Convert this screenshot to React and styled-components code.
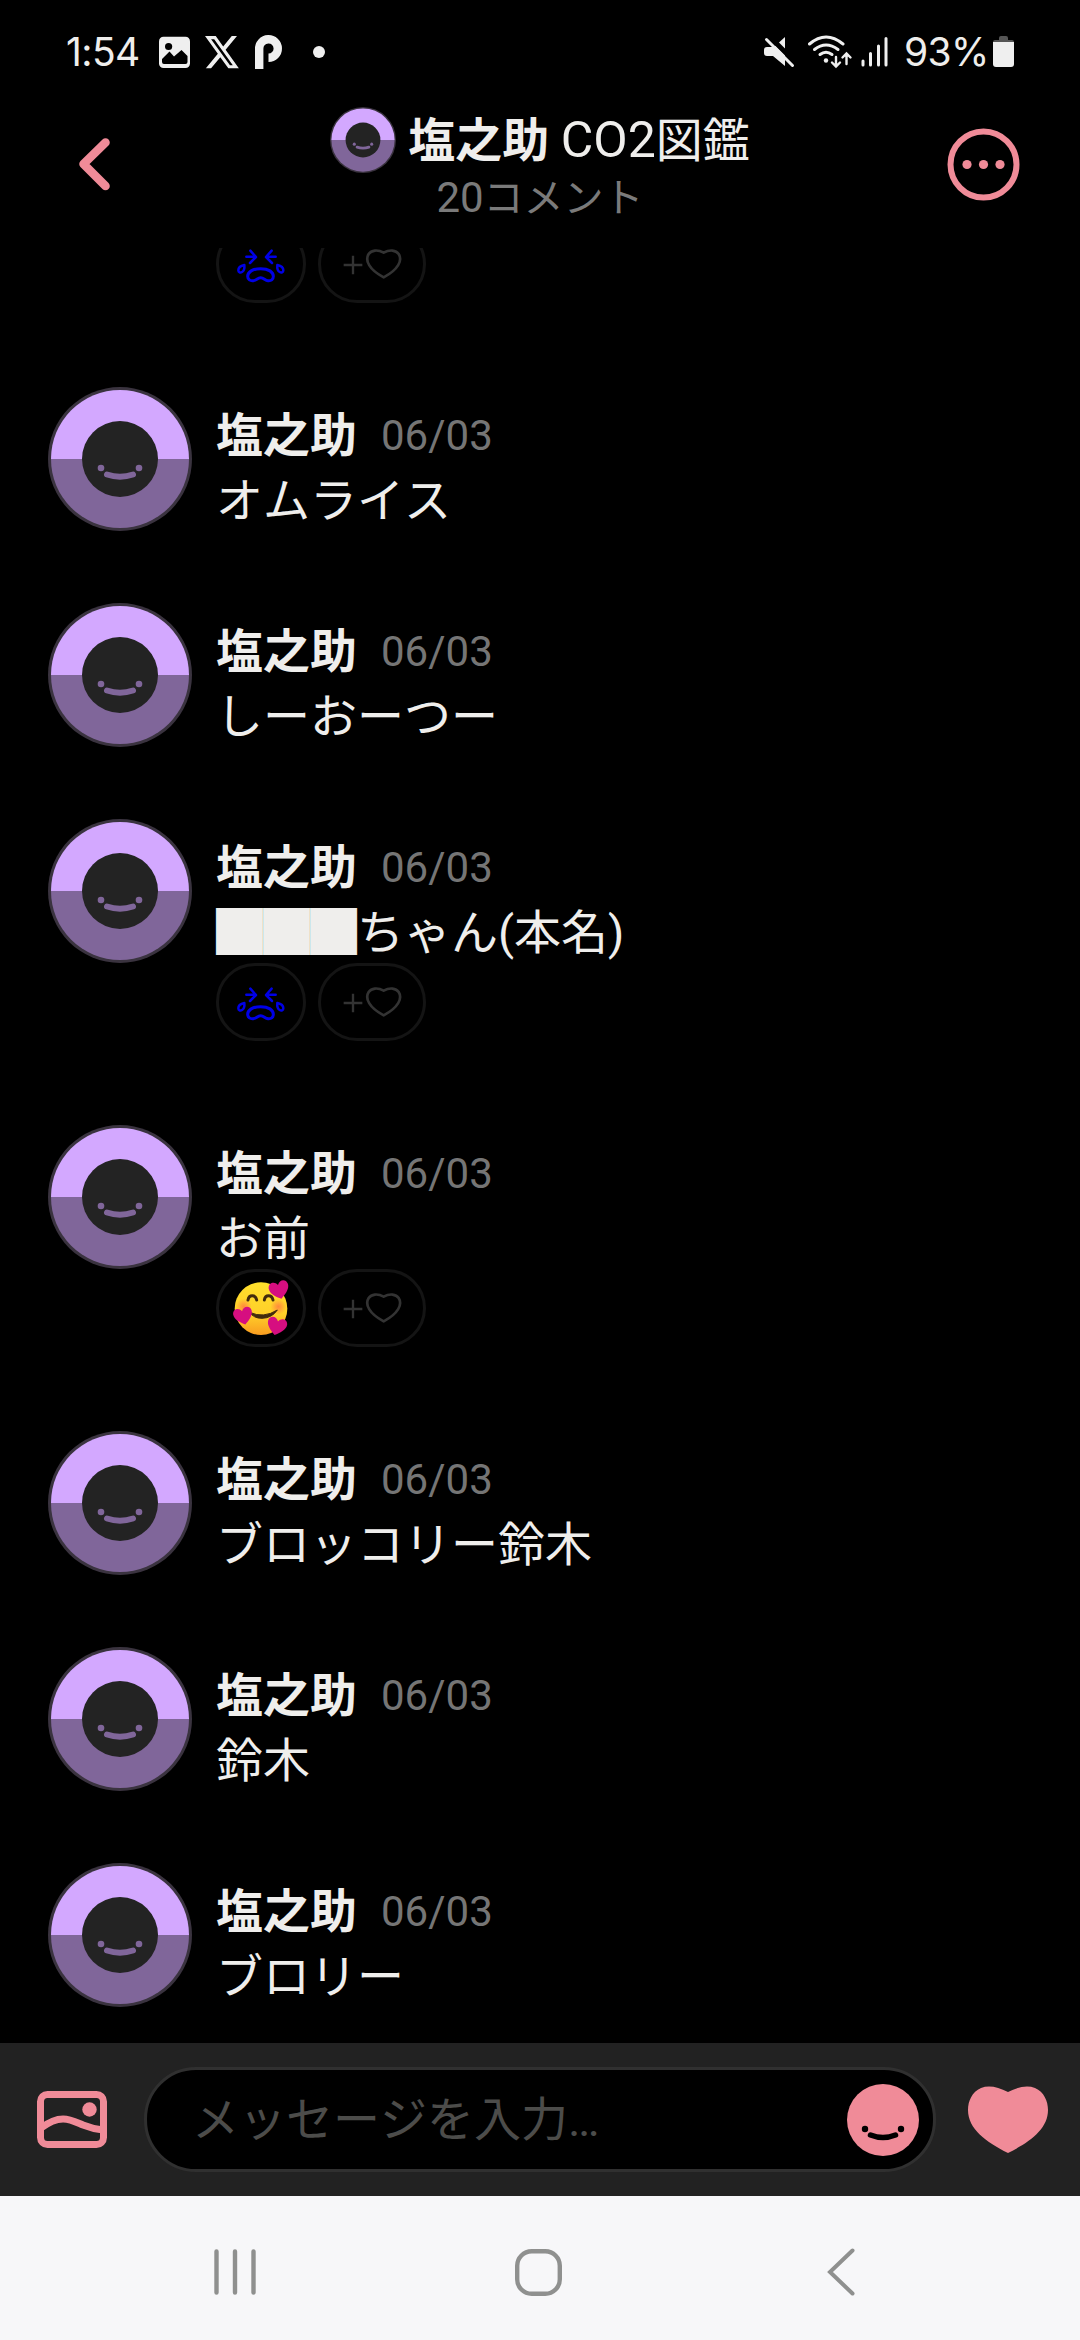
import styled, { createGlobalStyle } from "styled-components";

const GlobalStyle = createGlobalStyle`
  * {
    box-sizing: border-box;
  }

  body {
    margin: 0;
    background-color: black;
  }
`;

const Screen = styled.div`
  display: flex;
  flex-direction: column;
  width: 1080px;
  height: 2340px;
  overflow: hidden;
  background-color: black;
  color: #efeeec;
  font-family: Roboto, "Noto Sans CJK JP", sans-serif;
  font-size: 47px;
  font-kerning: none;

  svg {
    display: block;
    flex-shrink: 0;
  }
`;

const StatusBar = styled.div`
  display: flex;
  align-items: center;
  height: 104px;
  padding: 0 66px 0 66px;
  font-family: Inter, sans-serif;
  font-size: 39px;
  line-height: 52px;
`;

const Clock = styled.span`
  width: 93px;
  letter-spacing: -0.6px;
`;

const StatusIcons = styled.div`
  display: flex;
  align-items: center;
  flex: 1;
`;

const StatusRight = styled.div`
  display: flex;
  align-items: center;
`;

const Battery = styled.span`
  width: 89px;
  letter-spacing: -0.6px;
`;

const Header = styled.header`
  display: flex;
  align-items: flex-start;
  justify-content: space-between;
  height: 144px;
  padding: 0 60px;
`;

const IconButton = styled.button`
  display: flex;
  align-items: center;
  width: 73px;
  height: 120px;
  padding: 0 0 0 ${(props) => (props.$back ? "19px" : "0")};
  border: none;
  background: none;
`;

const TitleBlock = styled.div`
  display: flex;
  flex-direction: column;
  align-items: center;
  padding-top: 3px;
`;

const Title = styled.h1`
  display: flex;
  align-items: center;
  gap: 12px;
  height: 66px;
  margin: 0;
  font-size: 47px;
  font-weight: 400;
  line-height: 68px;
  white-space: pre;
`;

const Latin = styled.span`
  font-size: 50px;
`;

const CommentCount = styled.p`
  height: 48px;
  margin: 0;
  color: #7a7a7a;
  font-size: 40px;
  line-height: 50px;

  span {
    font-size: 42px;
  }
`;

const CommentList = styled.main`
  display: flex;
  flex-direction: column;
  justify-content: flex-end;
  gap: 72px;
  height: 1795px;
  padding: 0 48px 36px;
  overflow: hidden;
`;

const CommentRow = styled.article`
  display: flex;
  gap: 24px;
  padding-left: ${(props) => (props.$cut ? "168px" : "0")};
`;

const CommentHead = styled.div`
  display: flex;
  align-items: center;
  gap: 24px;
  height: 62px;
  margin-top: 18px;
`;

const Name = styled.strong`
  font-weight: 700;
  line-height: 64px;
`;

const CommentDate = styled.time`
  color: #757575;
  font-size: 42px;
  line-height: 62px;
`;

const CommentText = styled.p`
  height: 64px;
  margin: 0;
  line-height: 67px;
`;

const Reactions = styled.div`
  display: flex;
  gap: 12px;
  height: 90px;
`;

const Reaction = styled.div`
  display: flex;
  align-items: center;
  justify-content: center;
  width: ${(props) => (props.$wide ? "108px" : "90px")};
  height: 78px;
  border: 3px solid #141414;
  border-radius: 39px;
`;

const Composer = styled.footer`
  display: flex;
  align-items: center;
  height: 153px;
  padding: 0 31px 0 37px;
  background-color: #222222;
`;

const Field = styled.div`
  display: flex;
  align-items: center;
  width: 792px;
  height: 105px;
  margin: 0 32px 0 37px;
  padding: 0 14px 0 45px;
  border: 3px solid #303030;
  border-radius: 52px;
  background-color: black;
`;

const Placeholder = styled.span`
  flex: 1;
  color: #4c4c4a;
  line-height: 72px;
`;

const NavBar = styled.nav`
  display: flex;
  height: 144px;
  padding: 8px 88px 0 84px;
  background-color: #f7f7f9;
`;

const NavItem = styled.div`
  display: flex;
  align-items: center;
  justify-content: center;
  flex: 1;
`;

function Avatar({ size }) {
  return (
    <svg width={size} height={size} viewBox="0 0 144 144">
      <circle cx="72" cy="72" r="72" fill="#3a333f" />
      <path d="M3 72a69 69 0 0 1 138 0z" fill="#d3a8ff" />
      <path d="M3 72a69 69 0 0 0 138 0z" fill="#80669a" />
      <circle cx="72" cy="72" r="38" fill="#232323" />
      <g fill="#80669a">
        <circle cx="53" cy="81" r="3.3" />
        <circle cx="91" cy="81" r="3.3" />
      </g>
      <path
        d="M59 87.5q13 4.5 26 0"
        fill="none"
        stroke="#80669a"
        strokeWidth="6"
        strokeLinecap="round"
      />
    </svg>
  );
}

function CryFace() {
  return (
    <svg width="52" height="37" viewBox="106 461 156 111">
      <g
        fill="none"
        stroke="#0000e6"
        strokeWidth="7.5"
        strokeLinecap="round"
        strokeLinejoin="round"
      >
        <path d="M152 475l17 19l-18 18M140 493h26" />
        <path d="M216 475l-17 19l18 18M228 493h-26" />
        <path d="M134 518c-10 2 -18 8 -18 16c0 6 6 8 11 5c7 -4 8 -12 7 -21z" />
        <path d="M233 518c10 2 18 8 18 16c0 6 -6 8 -11 5c-7 -4 -8 -12 -7 -21z" />
        <path
          d="M183 529c-24 0 -39 10 -39 23c0 10 8 14 17 13c9 -1 13 -9 22 -9s13 8 22 9c9 1 16 -3 16 -13c0 -13 -14 -23 -38 -23z"
          strokeWidth="9"
        />
      </g>
    </svg>
  );
}

function LoveFace() {
  const heart = "M0 24C-13 15 -28 3 -27 -12C-25 -27 -7 -29 0 -15C7 -29 25 -27 27 -12C28 3 13 15 0 24z";
  return (
    <svg width="56" height="56" viewBox="100 450 168 168">
      <defs>
        <linearGradient id="face" x1="0" y1="0" x2="0" y2="1">
          <stop offset="0" stopColor="#ffe02c" />
          <stop offset="0.6" stopColor="#ffd029" />
          <stop offset="1" stopColor="#f99c20" />
        </linearGradient>
        <radialGradient id="blush">
          <stop offset="0" stopColor="#ff7043" stopOpacity="0.75" />
          <stop offset="1" stopColor="#ff7043" stopOpacity="0" />
        </radialGradient>
      </defs>
      <circle cx="184" cy="536" r="79" fill="url(#face)" />
      <circle cx="132" cy="530" r="24" fill="url(#blush)" />
      <circle cx="236" cy="530" r="24" fill="url(#blush)" />
      <g fill="none" stroke="#422b0d" strokeWidth="9" strokeLinecap="round">
        <path d="M145 510c3 -17 22 -17 26 0" />
        <path d="M194 510c3 -17 22 -17 26 0" />
      </g>
      <path
        d="M150 547q42 19 83 -7q-16 24 -46 25q-25 0 -37 -18z"
        fill="#422b0d"
        stroke="#422b0d"
        strokeWidth="3"
        strokeLinejoin="round"
      />
      <g fill="#d60e80">
        <path d={heart} transform="translate(239 481) rotate(-14) scale(1.1)" />
        <path d={heart} transform="translate(131 559) rotate(-14) scale(1.05)" />
        <path d={heart} transform="translate(231 590) rotate(14) scale(1.08)" />
      </g>
    </svg>
  );
}

function AddReaction() {
  return (
    <svg width="60" height="30" viewBox="427 469 180 90">
      <path d="M460 489v56M432 517h56" stroke="#333333" strokeWidth="7" />
      <path
        d="M552 480C534 470 515 472 507 484C495 503 508 531 552 554C596 531 609 503 597 484C589 472 570 470 552 480z"
        fill="none"
        stroke="#333333"
        strokeWidth="8"
        strokeLinejoin="round"
      />
    </svg>
  );
}

function ReactionRow({ kind }) {
  return (
    <Reactions>
      <Reaction>{kind === "cry" ? <CryFace /> : <LoveFace />}</Reaction>
      <Reaction $wide>
        <AddReaction />
      </Reaction>
    </Reactions>
  );
}

const comments = [
  { id: 1, text: "オムライス" },
  { id: 2, text: "しーおーつー" },
  { id: 3, text: "███ちゃん(本名)", reaction: "cry" },
  { id: 4, text: "お前", reaction: "love" },
  { id: 5, text: "ブロッコリー鈴木" },
  { id: 6, text: "鈴木" },
  { id: 7, text: "ブロリー" },
];

function App() {
  return (
    <>
      <GlobalStyle />
      <Screen>
        <StatusBar>
          <Clock>1:54</Clock>
          <StatusIcons>
            <svg width="166" height="36" viewBox="159 34 166 36">
              <rect x="159" y="36.7" width="31" height="31.3" rx="4.5" fill="#efefef" />
              <circle cx="168.6" cy="46.5" r="3.6" fill="black" />
              <path
                d="M162 62v-3l7.5 -7.5l4.5 5l7.5 -6.5l6 6v6q0 2 -2 2h-21.5q-2 0 -2 -2z"
                fill="black"
              />
              <svg
                x="205"
                y="36"
                width="34"
                height="32.5"
                viewBox="0 1.15 24 21.7"
                preserveAspectRatio="none"
              >
                <path
                  d="M18.901 1.153h3.68l-8.04 9.19L24 22.846h-7.406l-5.8-7.584-6.638 7.584H.474l8.6-9.83L0 1.154h7.594l5.243 6.932ZM17.61 20.644h2.039L6.486 3.24H4.298Z"
                  fill="#efefef"
                />
              </svg>
              <path
                d="M259.2 69v-20a9.3 9.3 0 1 1 9.3 8.8"
                fill="none"
                stroke="#efefef"
                strokeWidth="8.4"
              />
              <circle cx="319" cy="52" r="6" fill="#efefef" />
            </svg>
          </StatusIcons>
          <StatusRight>
            <svg width="140" height="36" viewBox="764 34 140 36">
              <g fill="#efefef">
                <path d="M764 50q0 -3 3 -3h7l11 -10v29l-12 -10h-6q-3 0 -3 -3z" />
                <path d="M770.5 37.5l26 26" stroke="black" strokeWidth="5" />
                <path
                  d="M766.5 39.5l26 26"
                  stroke="#efefef"
                  strokeWidth="3"
                  strokeLinecap="round"
                />
                <circle cx="826" cy="60.5" r="2.2" />
              </g>
              <g fill="none" stroke="#efefef" strokeWidth="3" strokeLinecap="round">
                <path d="M809.5 44q16.5 -14 33.5 0" />
                <path d="M814.5 49.5q11.5 -9 23.5 0" />
                <path d="M820 54.5q6 -4.5 12 0" />
                <path
                  d="M836 57v9M832 62.5l4 4l4 -4M846.5 64v-10M842.5 57.5l4 -4l4 4"
                  strokeWidth="2.4"
                />
                <path d="M863 61v4M870.5 53.5v11.5M878.5 46v19M886 38.5v26.5" />
              </g>
            </svg>
            <Battery>93%</Battery>
            <svg width="21" height="32" viewBox="0 0 21 32">
              <path d="M6 4V2q0 -2 2 -2h5q2 0 2 2v2h4q2 0 2 2H0q0 -2 2 -2z" fill="#555555" />
              <path d="M0 6h21v22q0 3 -3 3H3q-3 0 -3 -3z" fill="#efefef" />
            </svg>
          </StatusRight>
        </StatusBar>

        <Header>
          <IconButton $back>
            <svg width="31" height="54" viewBox="0 0 31 54">
              <path
                d="M26.5 5.5L4.5 27L26.5 49"
                fill="none"
                stroke="#f08b98"
                strokeWidth="8.6"
                strokeLinecap="round"
                strokeLinejoin="round"
              />
            </svg>
          </IconButton>
          <TitleBlock>
            <Title>
              <Avatar size={66} />
              <span>
                <Name>塩之助</Name> <Latin>CO2</Latin>図鑑
              </span>
            </Title>
            <CommentCount>
              <span>20</span>コメント
            </CommentCount>
          </TitleBlock>
          <IconButton>
            <svg width="73" height="73" viewBox="0 0 73 73">
              <circle cx="36.5" cy="36.5" r="33" fill="none" stroke="#f08b98" strokeWidth="6" />
              <g fill="#f08b98">
                <circle cx="20" cy="36.5" r="4.6" />
                <circle cx="36.5" cy="36.5" r="4.6" />
                <circle cx="53" cy="36.5" r="4.6" />
              </g>
            </svg>
          </IconButton>
        </Header>

        <CommentList>
          <CommentRow $cut>
            <ReactionRow kind="cry" />
          </CommentRow>
          {comments.map((comment) => (
            <CommentRow key={comment.id}>
              <Avatar size={144} />
              <div>
                <CommentHead>
                  <Name>塩之助</Name>
                  <CommentDate>06/03</CommentDate>
                </CommentHead>
                <CommentText>{comment.text}</CommentText>
                {comment.reaction && <ReactionRow kind={comment.reaction} />}
              </div>
            </CommentRow>
          ))}
        </CommentList>

        <Composer>
          <svg width="70" height="57" viewBox="0 0 70 57">
            <g fill="none" stroke="#f08b98" strokeWidth="7">
              <rect x="3.5" y="3.5" width="63" height="50" rx="7" />
              <path d="M4 37C24 22 34 29 46 34Q56 38 66 39" />
            </g>
            <circle cx="52.5" cy="18.5" r="7.2" fill="#f08b98" />
          </svg>
          <Field>
            <Placeholder>メッセージを入力…</Placeholder>
            <svg width="72" height="72" viewBox="0 0 72 72">
              <circle cx="36" cy="36" r="36" fill="#f08b98" />
              <circle cx="18" cy="45" r="3.2" />
              <circle cx="54" cy="45" r="3.2" />
              <path
                d="M23.5 51q12.5 5 25 0"
                fill="none"
                stroke="black"
                strokeWidth="5.5"
                strokeLinecap="round"
              />
            </svg>
          </Field>
          <svg width="80" height="67" viewBox="0 0 80 67">
            <path
              d="M40 6C50 1 59 -1 67 2C76 6 80 15 80 24C80 43 62 56 40 67C18 56 0 43 0 24C0 15 4 6 13 2C21 -1 30 1 40 6z"
              fill="#f08b98"
            />
          </svg>
        </Composer>

        <NavBar>
          <NavItem>
            <svg width="44" height="46" viewBox="0 0 44 46">
              <path
                d="M3.5 2.5v41M22 2.5v41M40.5 2.5v41"
                stroke="#8f908f"
                strokeWidth="4.4"
                strokeLinecap="round"
              />
            </svg>
          </NavItem>
          <NavItem>
            <svg width="47" height="47" viewBox="0 0 47 47">
              <rect
                x="2.2"
                y="2.2"
                width="42.6"
                height="42.6"
                rx="14.5"
                fill="none"
                stroke="#8f908f"
                strokeWidth="4.4"
              />
            </svg>
          </NavItem>
          <NavItem>
            <svg width="28" height="48" viewBox="0 0 28 48">
              <path
                d="M25.5 2.5L3 24L25.5 45.5"
                fill="none"
                stroke="#8f908f"
                strokeWidth="4"
                strokeLinecap="round"
              />
            </svg>
          </NavItem>
        </NavBar>
      </Screen>
    </>
  );
}

export default App;
